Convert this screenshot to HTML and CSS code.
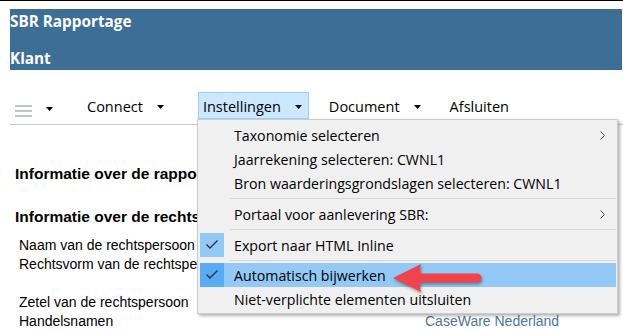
FILE: index.html
```html
<!DOCTYPE html>
<html lang="nl">
<head>
<meta charset="utf-8">
<title>SBR Rapportage</title>
<link rel="stylesheet" href="styles.css">
</head>
<body>
<div class="topline"></div>
<header class="header">
  <div class="header-line">SBR Rapportage</div>
  <div class="header-line">Klant</div>
</header>
<nav class="toolbar">
  <div class="tb-item tb-menu">
    <svg class="hamburger" width="17" height="20" viewBox="0 0 17 20"><rect y="8" width="17" height="2"/><rect y="13" width="17" height="2"/><rect y="18" width="17" height="2"/></svg>
    <svg class="caret caret-low" width="7" height="4" viewBox="0 0 7 4"><polygon points="0,0 7,0 3.5,4"/></svg>
  </div>
  <div class="tb-item tb-connect">Connect<svg class="caret" width="7" height="4" viewBox="0 0 7 4"><polygon points="0,0 7,0 3.5,4"/></svg></div>
  <div class="tb-item tb-active">Instellingen<svg class="caret" width="7" height="4" viewBox="0 0 7 4"><polygon points="0,0 7,0 3.5,4"/></svg></div>
  <div class="tb-item">Document<svg class="caret" width="7" height="4" viewBox="0 0 7 4"><polygon points="0,0 7,0 3.5,4"/></svg></div>
  <div class="tb-item tb-last">Afsluiten</div>
</nav>
<main class="content">
  <div class="section-title">Informatie over de rapportage</div>
  <div class="section-title second">Informatie over de rechtspersoon</div>
  <div class="fields">
    <div class="label">Naam van de rechtspersoon</div><div class="value"></div>
    <div class="label">Rechtsvorm van de rechtspersoon</div><div class="value"></div>
    <div class="label">&nbsp;</div><div class="value"></div>
    <div class="label">Zetel van de rechtspersoon</div><div class="value"></div>
    <div class="label">Handelsnamen</div><div class="value link">CaseWare Nederland</div>
  </div>
</main>
<div class="dropdown">
  <div class="mi"><span class="mi-icon"></span><span class="mi-text">Taxonomie selecteren</span><svg class="mi-sub" width="5" height="9" viewBox="0 0 5 9"><polyline points="0.5,0.5 4.5,4.5 0.5,8.5"/></svg></div>
  <div class="mi"><span class="mi-icon"></span><span class="mi-text">Jaarrekening selecteren: CWNL1</span></div>
  <div class="mi"><span class="mi-icon"></span><span class="mi-text">Bron waarderingsgrondslagen selecteren: CWNL1</span></div>
  <div class="sep"></div>
  <div class="mi"><span class="mi-icon"></span><span class="mi-text">Portaal voor aanlevering SBR:</span><svg class="mi-sub" width="5" height="9" viewBox="0 0 5 9"><polyline points="0.5,0.5 4.5,4.5 0.5,8.5"/></svg></div>
  <div class="sep"></div>
  <div class="mi"><span class="mi-icon checked"><svg width="24" height="24" viewBox="0 0 24 24"><polyline points="6.5,11.5 10,15 17.5,7.5"/></svg></span><span class="mi-text">Export naar HTML Inline</span></div>
  <div class="sep sep-short"></div>
  <div class="mi hl"><span class="mi-icon checked"><svg width="24" height="24" viewBox="0 0 24 24"><polyline points="6.5,11.5 10,15 17.5,7.5"/></svg></span><span class="mi-text">Automatisch bijwerken</span></div>
  <div class="mi"><span class="mi-icon"></span><span class="mi-text">Niet-verplichte elementen uitsluiten</span></div>
</div>
<svg class="annot-arrow" width="100" height="40" viewBox="0 0 100 40">
  <path d="M3 18 L31 4 Q29 11 31 13.5 L87 13.5 A4.5 4.5 0 0 1 87 22.5 L31 22.5 Q29 25 31 32 Z"/>
</svg>
</body>
</html>
```

FILE: styles.css
```css
html, body {
  margin: 0;
  padding: 0;
  background: #ffffff;
  overflow: hidden;
}

body {
  width: 623px;
  height: 331px;
  position: relative;
  font-family: "Liberation Sans", Arial, sans-serif;
  font-size: 14px;
  color: #000;
}

.topline {
  height: 1px;
  background: #000;
  margin-bottom: 8px;
}

.header {
  margin: 0 1px 0 10px;
  height: 61px;
  box-sizing: border-box;
  padding: 2px 0;
  background: #3c6e96;
  color: #fff;
  font-family: "Open Sans", "Noto Sans", sans-serif;
  font-weight: 700;
  font-size: 15.3px;
  line-height: 20px;
  display: flex;
  flex-direction: column;
  justify-content: space-between;
}

.toolbar {
  margin-left: 10px;
  padding: 22px 0 5px 0;
  border-bottom: 1px solid #c8c8c8;
  display: flex;
  align-items: flex-start;
  font-family: "Open Sans", "Noto Sans", sans-serif;
  font-size: 14.5px;
  line-height: 20px;
  color: #000;
}

.tb-item {
  display: flex;
  align-items: center;
  padding: 4px 6px 1px 4px;
  border: 1px solid transparent;
  margin-right: 15px;
}

.tb-menu {
  margin-right: 22px;
}

.tb-connect {
  margin-right: 27px;
}

.tb-last {
  margin-left: 2px;
}

.tb-active {
  background: #cce8ff;
  border-color: #99d1ff;
}

.hamburger {
  display: block;
  fill: #bcc6ce;
}

.caret {
  display: block;
  fill: #000;
  margin-left: 14px;
  flex: none;
}

.caret-low {
  margin-top: 4px;
}

.content {
  padding: 39px 0 0 15px;
  line-height: 19px;
}

.section-title {
  font-weight: 700;
  font-size: 15.5px;
  white-space: nowrap;
}

.section-title.second {
  margin-top: 24px;
}

.fields {
  margin-top: 10px;
  padding-left: 4px;
  display: grid;
  grid-template-columns: 406px 1fr;
  white-space: nowrap;
}

.link {
  color: #4a78a0;
}

.dropdown {
  position: absolute;
  left: 197px;
  top: 119px;
  width: 416px;
  padding: 3px 1px 2px 2px;
  background: #f0f0f0;
  border: 1px solid #cccccc;
  box-shadow: 2px 2px 3px rgba(0, 0, 0, 0.3);
  font-family: "Open Sans", "Noto Sans", sans-serif;
  font-size: 14.2px;
  color: #000;
}

.mi {
  display: flex;
  align-items: center;
  height: 24px;
  white-space: nowrap;
}

.mi.hl {
  background: #92c9f7;
}

.mi-icon {
  width: 24px;
  height: 24px;
  flex: none;
}

.mi-icon svg {
  display: block;
  fill: none;
  stroke: #333;
  stroke-width: 1.4;
}

.mi-icon.checked {
  background: #91c9f7;
}

.mi.hl .mi-icon.checked {
  background: #57acf5;
}

.mi-text {
  margin-left: 10px;
  flex: 1;
}

.mi-sub {
  display: block;
  margin-right: 11px;
  fill: none;
  stroke: #444;
  stroke-width: 1;
}

.sep {
  height: 7px;
  display: flex;
  align-items: center;
}

.sep::after {
  content: "";
  flex: 1;
  height: 1px;
  margin-left: 30px;
  background: #d7d7d7;
}

.sep.sep-short {
  height: 6px;
}

.annot-arrow {
  position: absolute;
  left: 390px;
  top: 260px;
  fill: #f0434a;
  filter: drop-shadow(1px 2px 1.5px rgba(0, 0, 0, 0.35));
}
```
